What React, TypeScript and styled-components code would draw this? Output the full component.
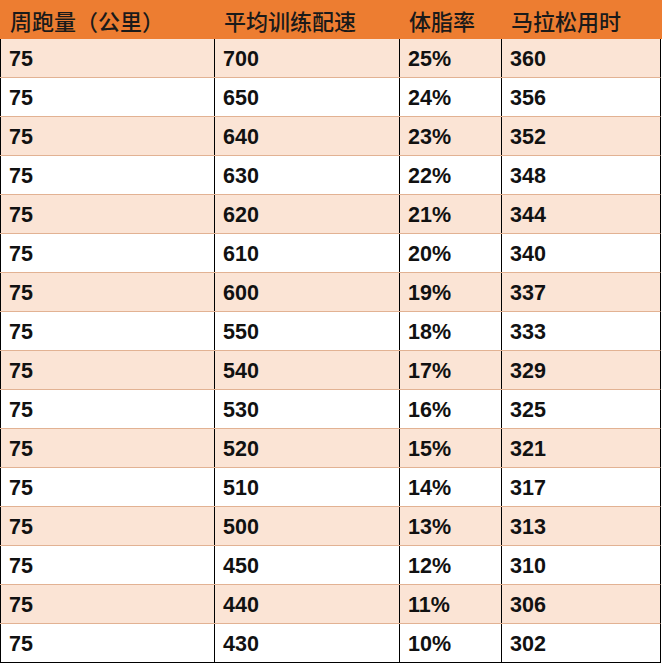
import styled, { createGlobalStyle } from "styled-components";

const Global = createGlobalStyle`
  html, body {
    margin: 0;
    padding: 0;
    background: #fff;
  }
`;

const Sheet = styled.div`
  width: 662px;
  font-family: "Liberation Sans", Arial, "Noto Sans CJK SC", sans-serif;
  color: #111;
`;

const cols = "214px 185px 102px 160px";

const HeadRow = styled.div`
  display: grid;
  grid-template-columns: ${cols} 1px;
  height: 39px;
  background: #ed7d31;
  box-sizing: border-box;
`;

const HeadCell = styled.div`
  display: flex;
  align-items: center;
  padding: 1px 0 0 10px;
  font-family: "Noto Sans CJK SC", sans-serif;
  font-weight: 500;
  font-size: 22px;
  color: #1a1a1a;
  white-space: nowrap;
`;

const Row = styled.div<{ $band: boolean; $last: boolean }>`
  display: grid;
  grid-template-columns: ${cols};
  width: 661px;
  height: 39px;
  box-sizing: border-box;
  background: ${(p) => (p.$band ? "#fbe4d5" : "#fff")};
  border-bottom: 1px solid ${(p) => (p.$last ? "#000" : "#e2b293")};
  border-right: 1px solid #000;
`;

const Cell = styled.div`
  display: flex;
  align-items: center;
  padding: 2px 0 0 8px;
  border-left: 1px solid #000;
  font-weight: 700;
  font-size: 21.5px;
`;

const headers = ["周跑量（公里）", "平均训练配速", "体脂率", "马拉松用时"];

const data = [
  [700, 25, 360],
  [650, 24, 356],
  [640, 23, 352],
  [630, 22, 348],
  [620, 21, 344],
  [610, 20, 340],
  [600, 19, 337],
  [550, 18, 333],
  [540, 17, 329],
  [530, 16, 325],
  [520, 15, 321],
  [510, 14, 317],
  [500, 13, 313],
  [450, 12, 310],
  [440, 11, 306],
  [430, 10, 302],
];

export default function App() {
  return (
    <>
      <Global />
      <Sheet>
        <HeadRow>
          {headers.map((h) => (
            <HeadCell key={h}>{h}</HeadCell>
          ))}
        </HeadRow>
        {data.map(([pace, fat, time], i) => (
          <Row key={pace} $band={i % 2 === 0} $last={i === data.length - 1}>
            <Cell>75</Cell>
            <Cell>{pace}</Cell>
            <Cell>{fat}%</Cell>
            <Cell>{time}</Cell>
          </Row>
        ))}
      </Sheet>
    </>
  );
}
